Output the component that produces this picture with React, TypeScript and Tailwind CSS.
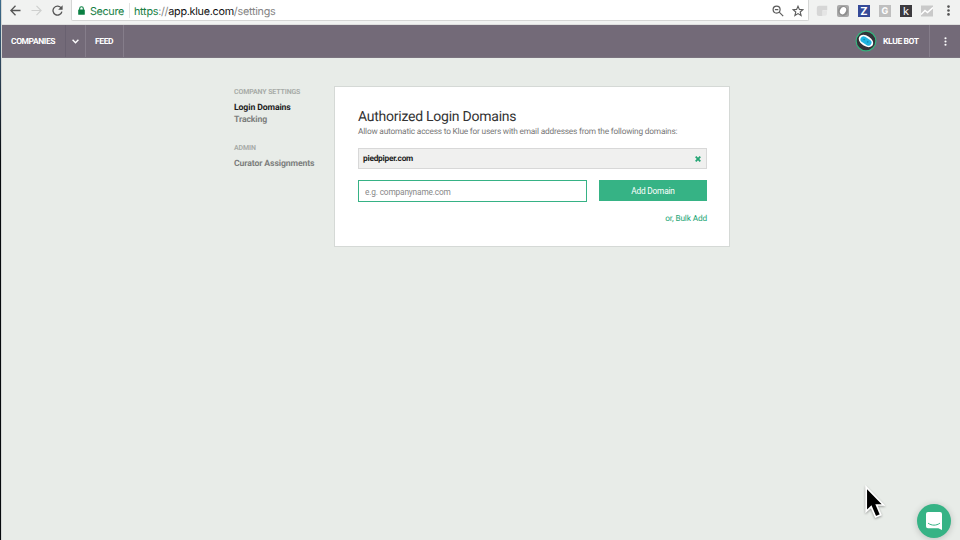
import type { ReactNode } from 'react';

function BrowserBar() {
  return (
    <header className="flex h-[25px] items-start border-b border-[#dedfde] bg-[#f1f2f1] font-['Inter','Liberation_Sans',sans-serif]">
      <div className="flex h-[21px] w-[69px] shrink-0 items-center pl-[8px]">
        <svg className="mr-[10px] h-[11px] w-[11px]" viewBox="0 0 11 11" fill="none" stroke="#555" strokeWidth="1.3">
          <path d="M10.5 5.5H1M5.5 .8L.9 5.5l4.6 4.7" />
        </svg>
        <svg className="mr-[10px] h-[11px] w-[11px]" viewBox="0 0 11 11" fill="none" stroke="#cfd0cf" strokeWidth="1.2">
          <path d="M.5 5.5H10M5.5 .8l4.6 4.7-4.6 4.7" />
        </svg>
        <svg className="h-[11px] w-[11px]" viewBox="0 0 11 11">
          <path d="M9.3 3.2A4.5 4.5 0 1 0 9.9 6.6" fill="none" stroke="#555" strokeWidth="1.3" />
          <path d="M10.6 .3v4.5H6.1z" fill="#555" />
        </svg>
      </div>
      <div className="flex h-[21px] w-[738px] shrink-0 items-center rounded-b-[2px] border border-t-0 border-[#d5d6d5] bg-white pl-[6px] pt-[1px]">
        <svg className="h-[9px] w-[7px] shrink-0" viewBox="0 0 7 9">
          <rect x=".2" y="3.4" width="6.6" height="5.4" rx=".6" fill="#0b8043" />
          <path d="M1.7 4V2.5a1.8 1.8 0 0 1 3.6 0V4" fill="none" stroke="#0b8043" strokeWidth="1.1" />
        </svg>
        <span className="ml-[5px] w-[39px] whitespace-nowrap pt-px text-[10.8px] leading-[21px] tracking-[-0.34px] text-[#188045]">Secure</span>
        <span className="h-[15px] w-px bg-[#e3e3e3]" />
        <span className="ml-[4px] whitespace-nowrap pt-px text-[10.8px] leading-[21px] tracking-[-0.27px] text-[#858585]">
          <span className="text-[#188045]">https</span>://<span className="text-[#111]">app.klue.com</span>/settings
        </span>
        <svg className="ml-auto mr-[8px] h-[12px] w-[12px]" viewBox="0 0 12 12" fill="none" stroke="#5c5c5c" strokeWidth="1.2">
          <circle cx="4.6" cy="4.6" r="3.5" />
          <path d="M7.2 7.2l4 4M2.9 4.6h3.4" />
        </svg>
        <svg className="mr-[4px] h-[12px] w-[12px]" viewBox="0 0 12 12" fill="none" stroke="#5c5c5c" strokeWidth="1.1">
          <path d="M6 1.2l1.4 3.2 3.5.3-2.7 2.3.9 3.5L6 8.6l-3.1 1.9.9-3.5L1.1 4.7l3.5-.3z" />
        </svg>
      </div>
      <div className="flex h-[21px] items-center pl-[7px]">
        <svg className="mr-[9px] h-[12px] w-[12px]" viewBox="0 0 12 12">
          <path d="M3 .8h8.2v4.4H6.5v5.7H3A2.2 2.2 0 0 1 .8 8.7V3A2.2 2.2 0 0 1 3 .8z" fill="#d6d6d6" />
          <path d="M6.8 5.5H11v3.2a2 2 0 0 1-2 2H6.8z" fill="#e5e5e5" />
        </svg>
        <svg className="mr-[9px] h-[12px] w-[12px]" viewBox="0 0 12 12">
          <rect width="12" height="12" rx="2" fill="#a9a9a9" />
          <circle cx="6" cy="6" r="4.9" fill="#8e8e8e" />
          <ellipse cx="6" cy="5.7" rx="2.9" ry="3.8" transform="rotate(28 6 5.7)" fill="#fff" />
        </svg>
        <span className="mr-[9px] flex h-[12px] w-[12px] items-center justify-center bg-[#354a98] pt-px text-[11px] font-bold leading-none text-white">Z</span>
        <span className="mr-[9px] flex h-[12px] w-[12px] items-center justify-center bg-[#bfbfbf] pt-px text-[9px] font-bold leading-none text-white">G</span>
        <span className="mr-[9px] flex h-[12px] w-[12px] items-center justify-center bg-[#3c3a3e] pt-px text-[11px] leading-none text-white">k</span>
        <svg className="mr-[14px] h-[12px] w-[12px]" viewBox="0 0 12 12">
          <rect y=".5" width="12" height="11" fill="#c9c9c9" />
          <path d="M0 9.5l4-4 2.5 2 5.5-5" fill="none" stroke="#fff" strokeWidth="1.5" />
        </svg>
        <Dots className="h-[11px] w-[3px] text-[#555]" />
      </div>
    </header>
  );
}

function Dots({ className }: { className: string }) {
  return (
    <svg className={className} viewBox="0 0 3 11" fill="currentColor">
      <circle cx="1.5" cy="1.6" r="1.3" />
      <circle cx="1.5" cy="5.5" r="1.3" />
      <circle cx="1.5" cy="9.4" r="1.3" />
    </svg>
  );
}

function NavCell({ className, children }: { className: string; children: ReactNode }) {
  return <div className={`flex h-full items-center border-r border-[#857d8a] ${className}`}>{children}</div>;
}

function NavBar() {
  return (
    <nav className="flex h-[33px] items-center border-b border-[#7b7480] bg-[#736a78] text-[8.5px] font-bold leading-[13px] text-white">
      <NavCell className="w-[64px] border-[#696170] pl-[9px] pt-[2px]"><span className="tracking-[-0.42px]">COMPANIES</span></NavCell>
      <NavCell className="w-[20px] justify-center">
        <svg className="h-[5px] w-[7px]" viewBox="0 0 7 5" fill="none" stroke="#fff" strokeWidth="1.4">
          <path d="M.6.8l2.9 2.9L6.4.8" />
        </svg>
      </NavCell>
      <NavCell className="w-[38px] pl-[9px] pt-[2px]"><span className="tracking-[-0.37px]">FEED</span></NavCell>
      <div className="ml-auto flex h-full items-center">
        <svg className="mr-[6px] h-[22px] w-[22px]" viewBox="0 0 22 22">
          <circle cx="11" cy="11" r="9.9" fill="#333238" stroke="#36b37e" strokeWidth="1.2" />
          <g transform="rotate(33 11 11)">
            <ellipse cx="11" cy="11" rx="8" ry="5.2" fill="#fff" />
            <rect x="5" y="7.9" width="12" height="6.2" rx="3.1" fill="#20b4e0" />
            <circle cx="8.6" cy="10.8" r=".7" fill="#0b7aa3" />
            <circle cx="13" cy="10.8" r=".7" fill="#0b7aa3" />
          </g>
        </svg>
        <NavCell className="w-[47px] pt-[2px]"><span className="whitespace-nowrap tracking-[-0.36px]">KLUE BOT</span></NavCell>
        <div className="flex w-[30px] justify-center"><Dots className="h-[9px] w-[3px]" /></div>
      </div>
    </nav>
  );
}

function Sidebar() {
  return (
    <aside className="w-[100px] shrink-0 whitespace-nowrap text-[8.7px] font-bold leading-[12px] tracking-[-0.12px] text-[#7d7f7e]">
      <h2 className="text-[7px] font-bold text-[#a9aca9]">COMPANY SETTINGS</h2>
      <p className="mt-[4px] text-[#1d1d1d]">Login Domains</p>
      <p>Tracking</p>
      <h2 className="mt-[16px] text-[7px] font-bold text-[#a9aca9]">ADMIN</h2>
      <p className="mt-[4px]">Curator Assignments</p>
    </aside>
  );
}

function DomainsCard() {
  return (
    <section className="h-[161px] w-[396px] border border-[#d5d9d6] bg-white pl-[23px] pr-[22px] pt-[22px]">
      <h1 className="whitespace-nowrap text-[14px] leading-[17px] tracking-[-0.25px] text-[#333]">Authorized Login Domains</h1>
      <p className="whitespace-nowrap text-[8.3px] leading-[12px] tracking-[-0.19px] text-[#777]">Allow automatic access to Klue for users with email addresses from the following domains:</p>
      <div className="mt-[10px] flex h-[21px] items-center justify-between border border-[#d8d8d8] bg-[#f0f0ef] px-[4px] pr-[5px] text-[8.3px] font-bold leading-[13px] tracking-[-0.23px] text-[#222]">
        <span className="pt-[2px]">piedpiper.com</span>
        <svg className="h-[6px] w-[6px]" viewBox="0 0 6 6" stroke="#24a574" strokeWidth="1.8">
          <path d="M.7.7l4.6 4.6M5.3.7L.7 5.3" />
        </svg>
      </div>
      <div className="mt-[11px] flex items-start justify-between">
        <input
          className="h-[22px] w-[229px] border border-[#36b285] bg-white px-[6px] pt-[2px] text-[8.3px] tracking-[-0.16px] outline-none placeholder:text-[#888] placeholder:opacity-100"
          placeholder="e.g. companyname.com"
        />
        <button className="h-[21px] w-[108px] bg-[#36b385] pt-px text-[8.3px] leading-[20px] tracking-[-0.2px] text-white">Add Domain</button>
      </div>
      <p className="mt-[11px] text-right text-[8.3px] leading-[12px] tracking-[-0.15px] text-[#25a777]">or, Bulk Add</p>
    </section>
  );
}

export default function App() {
  return (
    <div className="relative flex h-[540px] w-[960px] overflow-hidden bg-[#e8ece8] font-['Roboto','Liberation_Sans',sans-serif] [text-rendering:geometricPrecision]">
      <div className="w-px shrink-0 bg-linear-to-b from-[#3d6c8d] via-[#2a3d50] via-15% to-[#070a0d] to-30%" />
      <div className="w-[959px] border-l border-[#d4d7d5]">
        <BrowserBar />
        <NavBar />
        <main className="flex pl-[232px] pt-[28px]">
          <Sidebar />
          <DomainsCard />
        </main>
      </div>
      <button className="absolute left-[917px] top-[504px] flex h-[34px] w-[34px] items-center justify-center rounded-full bg-[#36b385] shadow-[0_1px_7px_rgba(0,0,0,0.2)]">
        <svg className="h-[18px] w-[16px]" viewBox="0 0 16 18">
          <path d="M2 0h12a2 2 0 0 1 2 2v16l-3.6-1.8H2a2 2 0 0 1-2-2V2a2 2 0 0 1 2-2z" fill="#fff" />
          <path d="M2.4 11.4c3.4 2.4 7.8 2.4 11.2 0" fill="none" stroke="#36b385" strokeWidth="1" strokeLinecap="round" />
        </svg>
      </button>
      <svg className="absolute left-[862px] top-[483px] h-[38px] w-[28px] drop-shadow-[0_1px_1px_rgba(0,0,0,0.35)]" viewBox="0 0 28 38">
        <path d="M4.2 4.2v24.2l5-4.6 4.4 10.2 5.2-2.2-4.2-9.8h6.9z" fill="#000" stroke="#fff" strokeWidth="1.7" />
      </svg>
    </div>
  );
}
